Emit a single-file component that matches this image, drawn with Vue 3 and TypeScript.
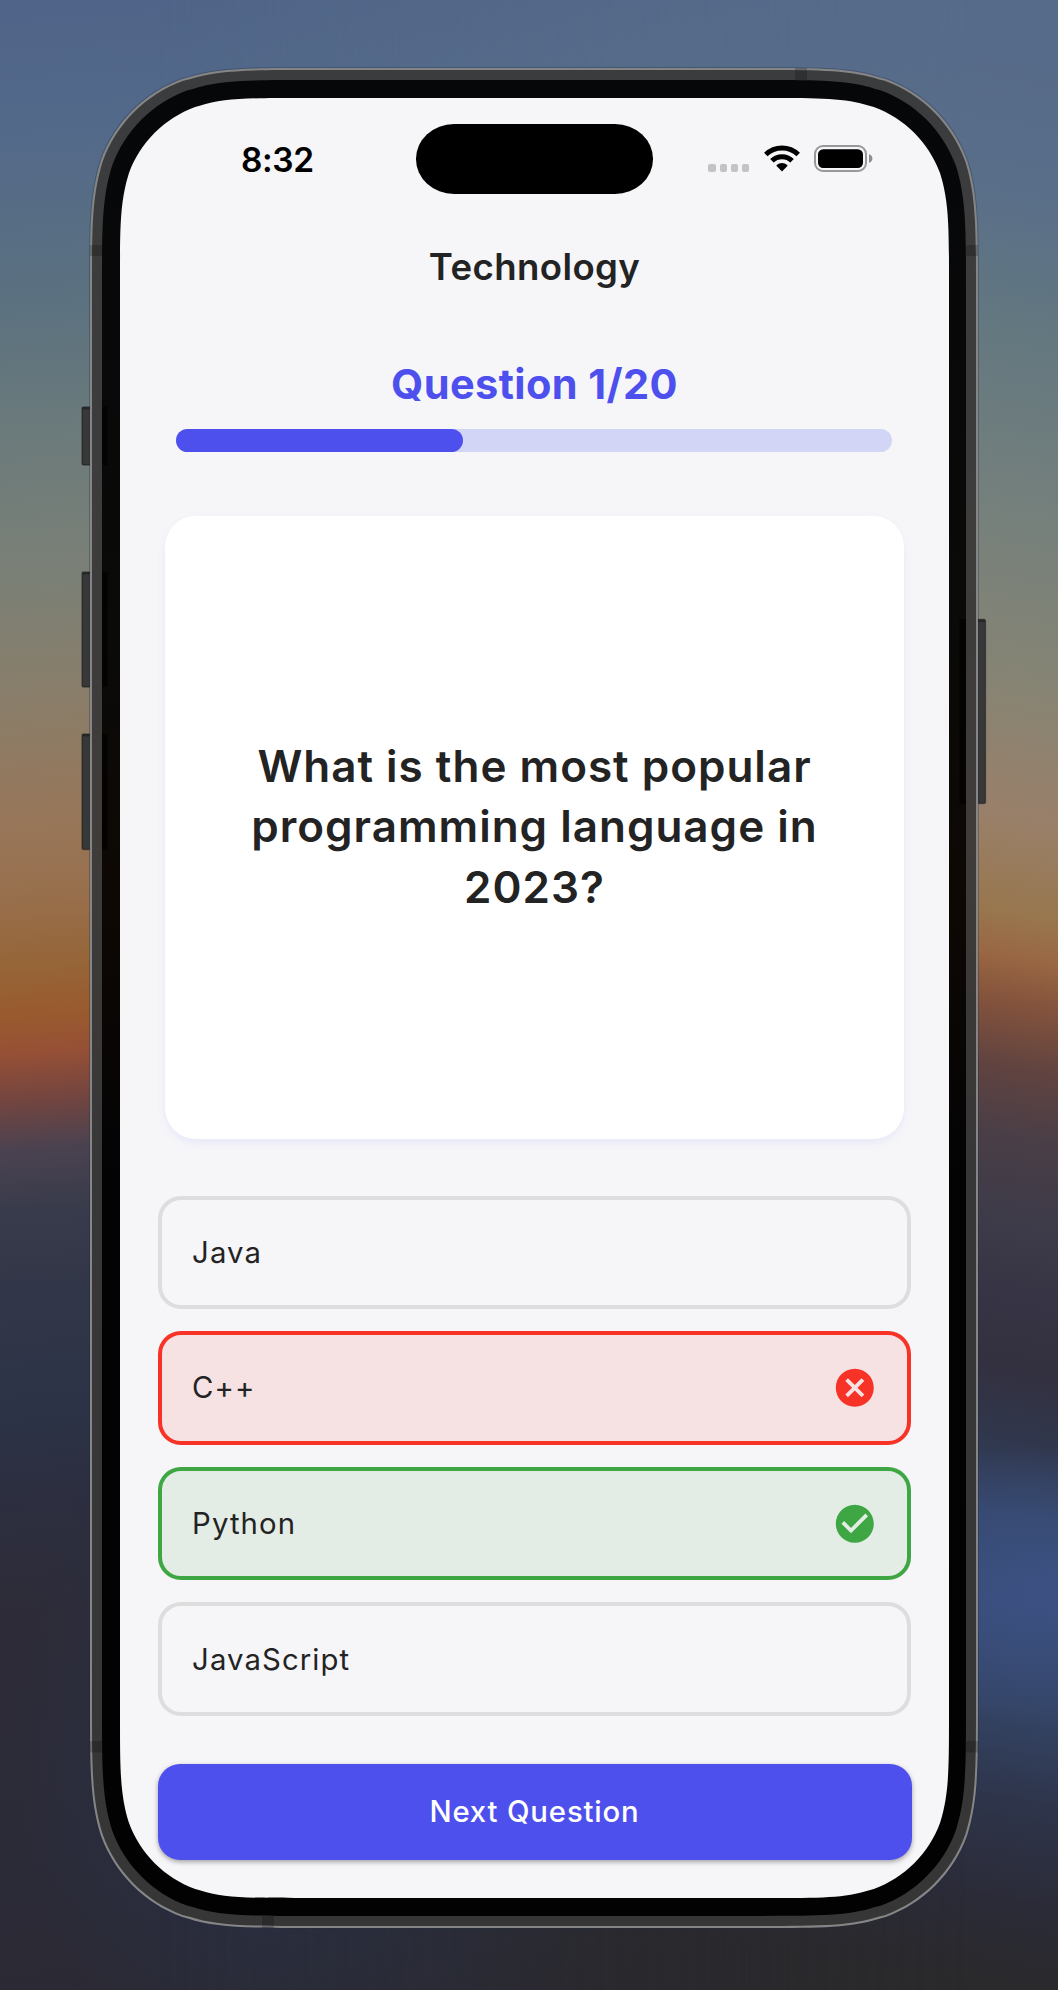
<script setup lang="ts">
interface Option {
  label: string
  state: 'idle' | 'wrong' | 'correct'
}

const options: Option[] = [
  { label: 'Java', state: 'idle' },
  { label: 'C++', state: 'wrong' },
  { label: 'Python', state: 'correct' },
  { label: 'JavaScript', state: 'idle' },
]

const progress = 0.4

/** Rectangle with continuous-curvature corners. */
function squircle(x: number, y: number, w: number, h: number, r: number): string {
  const k: number[][] = [
    [1.52866, 0],
    [1.08849, 0], [0.86841, 0], [0.66993, 0.0655],
    [0.63149, 0.07491],
    [0.37282, 0.16906], [0.16906, 0.37282], [0.07491, 0.63149],
    [0, 0.86841], [0, 1.08849], [0, 1.52866],
  ]
  const corner = (right: boolean, bottom: boolean, reverse: boolean): string => {
    const pts = k.map(([a, b]) => {
      const px = right ? x + w - a * r : x + a * r
      const py = bottom ? y + h - b * r : y + b * r
      return `${px.toFixed(2)} ${py.toFixed(2)}`
    })
    if (reverse) pts.reverse()
    return reverse
      ? `L${pts[0]}C${pts[1]} ${pts[2]} ${pts[3]}C${pts[4]} ${pts[5]} ${pts[6]}L${pts[7]}C${pts[8]} ${pts[9]} ${pts[10]}`
      : `L${pts[0]}C${pts[1]} ${pts[2]} ${pts[3]}L${pts[4]}C${pts[5]} ${pts[6]} ${pts[7]}C${pts[8]} ${pts[9]} ${pts[10]}`
  }
  const path =
    corner(true, false, false) + corner(true, true, true) + corner(false, true, false) + corner(false, false, true)
  return 'M' + path.slice(1) + 'Z'
}

const halo = squircle(89, 67, 890, 1862, 147)
const rim = squircle(90, 68, 888, 1860, 146)
const band = squircle(92, 70, 884, 1856, 144.5)
const bezel = squircle(102, 80, 864, 1836, 135.5)
const glass = squircle(120, 98, 829, 1800, 119)

const leftKeys = [
  { y: 407, h: 58 },
  { y: 572, h: 115 },
  { y: 734, h: 115.5 },
]
</script>

<template>
  <main class="stage">
    <div class="sky sky-left"></div>
    <div class="sky sky-right"></div>

    <svg class="shell" viewBox="0 0 1058 1990" aria-hidden="true">
      <defs>
        <linearGradient id="bandFill" x1="0" y1="0" x2="0" y2="1">
          <stop offset="0" stop-color="#3b3c3e" />
          <stop offset="0.4" stop-color="#3f3c3a" />
          <stop offset="0.6" stop-color="#383737" />
          <stop offset="1" stop-color="#363637" />
        </linearGradient>
        <linearGradient id="bezelFill" x1="0" y1="0" x2="0" y2="1">
          <stop offset="0" stop-color="#060709" />
          <stop offset="0.3" stop-color="#0a0a08" />
          <stop offset="0.45" stop-color="#0e0804" />
          <stop offset="0.6" stop-color="#030304" />
          <stop offset="1" stop-color="#020203" />
        </linearGradient>
      </defs>
      <g fill="#383838" stroke="#000" stroke-opacity="0.35" stroke-width="1.4">
        <rect v-for="key in leftKeys" :key="key.y" x="82" :y="key.y" width="12" :height="key.h" rx="1.5" />
        <rect x="974" y="619.5" width="11.5" height="184" rx="1.5" />
      </g>
      <g fill="#262626">
        <rect v-for="key in leftKeys" :key="key.y" x="82.5" :y="key.y" width="9" height="2.5" />
        <rect x="976" y="619.5" width="9" height="2.5" />
      </g>
      <path :d="halo" fill="#1c2a40" fill-opacity="0.3" />
      <path :d="rim" fill="#858585" />
      <path :d="band" fill="url(#bandFill)" />
      <g fill="#000" fill-opacity="0.2">
        <rect x="90" y="245" width="12" height="11" />
        <rect x="966" y="245" width="12" height="11" />
        <rect x="90" y="1741" width="12" height="11.5" />
        <rect x="966" y="1741" width="12" height="11.5" />
        <rect x="795" y="68" width="12" height="12" />
        <rect x="262" y="1916" width="12" height="12" />
      </g>
      <path :d="bezel" fill="url(#bezelFill)" />
      <g fill="#000" fill-opacity="0.65">
        <rect v-for="key in leftKeys" :key="key.y" x="102" :y="key.y" width="5.5" :height="key.h" />
        <rect x="959.5" y="619" width="6.5" height="185" />
      </g>
      <path :d="glass" fill="#f6f6f9" />
    </svg>

    <section class="screen">
      <header class="status">
        <span class="time">8:32</span>
        <div class="island"></div>
        <div class="indicators">
          <div class="cell"><i></i><i></i><i></i><i></i></div>
          <svg class="wifi" viewBox="0 0 36 27">
            <g fill="none" stroke="#000" stroke-width="5">
              <path d="M1.8 9.5A23.2 23.2 0 0 1 34.2 9.5" />
              <path d="M7.9 15.8A14.4 14.4 0 0 1 28.1 15.8" />
            </g>
            <path d="M18 26.4L12.6 21A1 1 0 0 1 12.7 19.9A8 8 0 0 1 23.3 19.9A1 1 0 0 1 23.4 21Z" />
          </svg>
          <svg class="battery" viewBox="0 0 59 27">
            <rect x="1" y="1" width="51" height="25" rx="8" fill="none" stroke="#98989b" stroke-width="2" />
            <rect x="4" y="4.2" width="45" height="18.8" rx="5.2" />
            <path d="M55 9.3C57.6 10.2 58.4 11.7 58.4 13.5S57.6 16.8 55 17.7Z" fill="#8e8e91" />
          </svg>
        </div>
      </header>

      <h1 class="category">Technology</h1>
      <h2 class="counter">Question 1/20</h2>
      <div class="track"><div class="fill" :style="{ width: progress * 100 + '%' }"></div></div>

      <article class="card">
        <p>What is the most popular<br />programming language in<br />2023?</p>
      </article>

      <ul class="options">
        <li v-for="option in options" :key="option.label" :class="['option', option.state]">
          <span>{{ option.label }}</span>
          <svg v-if="option.state === 'wrong'" class="mark" viewBox="0 0 24 24">
            <path
              d="M12 2C6.47 2 2 6.47 2 12s4.47 10 10 10 10-4.47 10-10S17.53 2 12 2zm5 13.59L15.59 17 12 13.41 8.41 17 7 15.59 10.59 12 7 8.41 8.41 7 12 10.59 15.59 7 17 8.41 13.41 12 17 15.59z"
            />
          </svg>
          <svg v-else-if="option.state === 'correct'" class="mark" viewBox="0 0 24 24">
            <path
              d="M12 2C6.48 2 2 6.48 2 12s4.48 10 10 10 10-4.48 10-10S17.52 2 12 2zm-2 15l-5-5 1.41-1.41L10 14.17l7.59-7.59L19 8l-9 9z"
            />
          </svg>
        </li>
      </ul>

      <button class="next" type="button">Next Question</button>
    </section>
  </main>
</template>

<style>
body {
  background: #2b2a30;
}
</style>

<style scoped>
.stage {
  position: relative;
  box-sizing: border-box;
  width: 1058px;
  height: 1990px;
  padding: 98px 109px 92px 120px;
  overflow: hidden;
  font-family: Inter, "Liberation Sans", sans-serif;
  color: #232323;
}

.sky,
.shell {
  position: absolute;
  inset: 0;
  width: 1058px;
  height: 1990px;
}

.sky-left {
  background:
    radial-gradient(ellipse 330px 400px at 340px 1740px, rgba(41, 48, 70, 0.9) 30%, rgba(41, 48, 70, 0)),
    linear-gradient(
      176deg,
      #4f6488 0,
      #53698a 130px,
      #5b7180 300px,
      #6c7b7b 440px,
      #7b8076 580px,
      #8a7e6a 700px,
      #977659 820px,
      #98704e 890px,
      #966538 965px,
      #995a2e 1015px,
      #965036 1052px,
      #74453f 1098px,
      #4b4250 1148px,
      #383b4b 1210px,
      #313648 1300px,
      #2c3346 1410px,
      #2c2e3f 1500px,
      #2d2b37 1620px,
      #2b2b38 1850px,
      #2b2932 2060px
    );
}

.sky-right {
  background:
    radial-gradient(ellipse 300px 140px at 1070px 1585px, rgba(62, 84, 136, 0.8), rgba(62, 84, 136, 0)),
    linear-gradient(
      190deg,
      #566a8a 0,
      #596e89 190px,
      #627780 320px,
      #75807c 510px,
      #858474 670px,
      #99806a 810px,
      #98774f 905px,
      #996743 950px,
      #84533c 995px,
      #604340 1060px,
      #493e47 1130px,
      #3d3b49 1215px,
      #363444 1290px,
      #33303f 1350px,
      #30364b 1420px,
      #344567 1500px,
      #374a74 1590px,
      #344465 1690px,
      #2e354b 1780px,
      #2b2b38 1880px,
      #2a292b 1970px
    );
  -webkit-mask-image: linear-gradient(90deg, transparent 15%, #000 92%);
  mask-image: linear-gradient(90deg, transparent 15%, #000 92%);
}

.screen {
  position: relative;
  display: flex;
  flex-direction: column;
  align-items: stretch;
  width: 829px;
  height: 1800px;
}

.status {
  display: grid;
  grid-template-columns: 296px 237px 296px;
  height: 69.5px;
  margin-top: 26px;
}

.time {
  padding: 16px 0 0 121px;
  font-size: 33.5px;
  line-height: 40px;
  font-weight: 600;
  letter-spacing: -0.4px;
  color: #000;
}

.island {
  background: #000;
  border-radius: 38px / 34.75px;
}

.indicators {
  display: flex;
  align-items: flex-end;
  height: 27px;
  padding: 20.5px 0 0 55.3px;
}

.cell {
  display: flex;
  gap: 4px;
  width: 55.4px;
}

.cell i {
  width: 7.3px;
  height: 7.3px;
  border-radius: 2px;
  background: #c3c3c5;
}

.wifi {
  width: 36px;
  height: 27px;
}

.battery {
  width: 59px;
  height: 27px;
  margin-left: 14.5px;
}

.category {
  margin: 53.5px 0 0;
  font-size: 36.6px;
  line-height: 40px;
  font-weight: 600;
  letter-spacing: 0.4px;
  text-align: center;
}

.counter {
  margin: 72px 0 0;
  font-size: 41.5px;
  line-height: 50px;
  font-weight: 700;
  letter-spacing: 0.4px;
  text-align: center;
  color: #4e50ee;
}

.track {
  width: 716px;
  height: 23px;
  margin: 20px 0 0 56.3px;
  border-radius: 11.5px;
  background: #d3d5f7;
}

.fill {
  height: 100%;
  border-radius: 11.5px;
  background: #4e50ee;
}

.card {
  display: flex;
  align-items: center;
  justify-content: center;
  height: 623px;
  margin: 64px 45px 0;
  border-radius: 31px;
  background: #fff;
  box-shadow: 0 4px 9px rgba(78, 80, 238, 0.08);
}

.card p {
  margin: 0 0 2px;
  font-size: 44px;
  line-height: 60.3px;
  font-weight: 600;
  letter-spacing: 1px;
  text-align: center;
  white-space: nowrap;
}

.options {
  display: flex;
  flex-direction: column;
  gap: 22.3px;
  margin: 56.7px 37.6px 0;
  padding: 0;
  list-style: none;
}

.option {
  box-sizing: border-box;
  display: flex;
  align-items: center;
  justify-content: space-between;
  height: 113.3px;
  padding: 0 30px 0 30.5px;
  border: 4px solid #dddddd;
  border-radius: 23px;
  font-size: 29.3px;
  letter-spacing: 1.1px;
}

.wrong {
  border-color: #f63326;
  background: #f6e1e3;
}

.correct {
  border-color: #3ea743;
  background: #e3ede5;
}

.mark {
  width: 45.6px;
  height: 45.6px;
}

.wrong .mark {
  fill: #f63326;
}

.correct .mark {
  fill: #3ea743;
}

.next {
  height: 96px;
  margin: 48.2px 37.5px 0;
  padding: 0;
  border: 0;
  border-radius: 22px;
  background: #4e50ee;
  box-shadow: 0 2px 5px rgba(0, 0, 0, 0.35);
  font: 500 29.3px Inter, "Liberation Sans", sans-serif;
  letter-spacing: 0.85px;
  color: #fff;
}
</style>
